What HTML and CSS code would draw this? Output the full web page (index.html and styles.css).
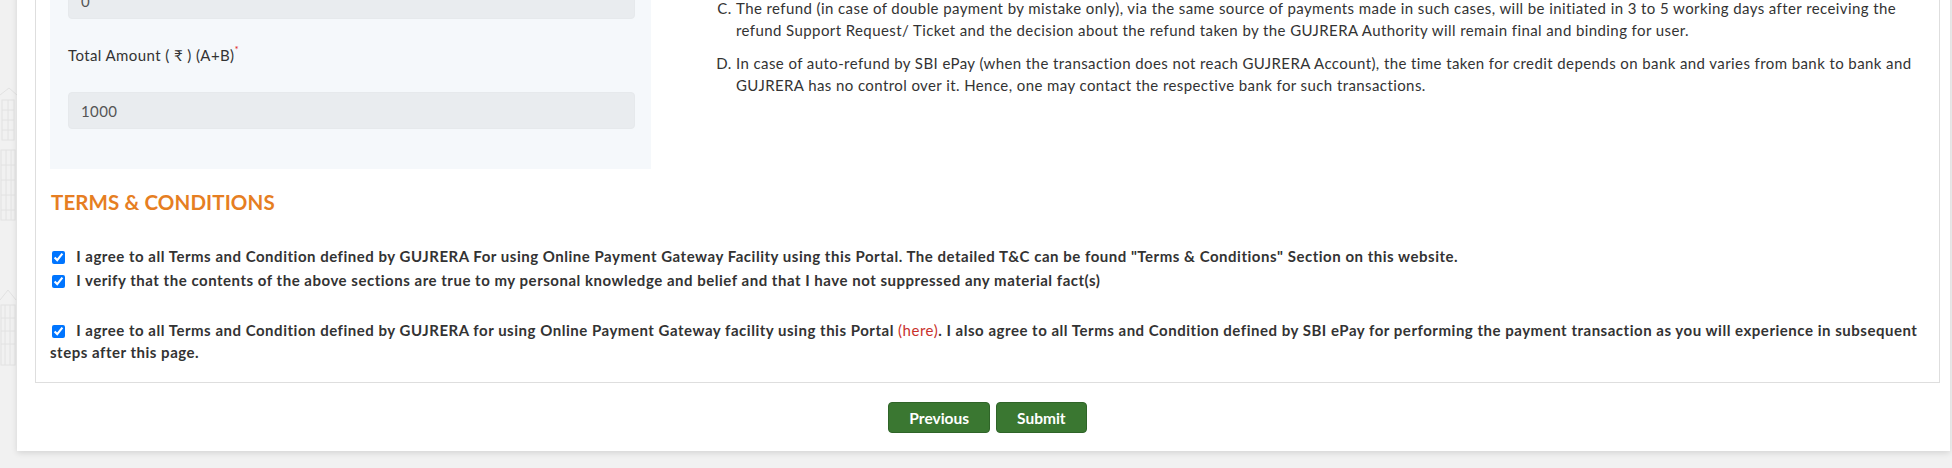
FILE: index.html
```html
<!DOCTYPE html>
<html lang="en">

<head>
    <meta charset="UTF-8" />
    <meta name="viewport" content="width=device-width, initial-scale=1.0" />
    <title>Payment - Terms &amp; Conditions</title>

    <link rel="stylesheet" href="styles.css">
</head>

<body>
    <div class="backdrop">
        <svg width="17" height="468" viewBox="0 0 17 468">
            <g fill="none" stroke="#e2e2e2" stroke-width="1">
                <path d="M0 95 L9 88 L17 95" />
                <rect x="2" y="100" width="12" height="40" />
                <path d="M2 110 H14 M2 120 H14 M2 130 H14 M8 100 V140" />
                <rect x="1" y="150" width="14" height="70" />
                <path d="M1 165 H15 M1 180 H15 M1 195 H15 M1 210 H15 M6 150 V220 M11 150 V220" />
                <path d="M0 300 L8 290 L16 300" />
                <rect x="1" y="305" width="14" height="60" />
                <path d="M1 318 H15 M1 331 H15 M1 344 H15 M5 305 V365 M10 305 V365" />
            </g>
        </svg>
    </div>

    <div class="card">
        <div class="box">
            <div class="top-row">
                <div class="fee-panel">
                    <input class="form-control" type="text" value="0" disabled>

                    <div class="form-group">
                        <label>Total Amount ( ₹ ) (A+B)<sup class="req">*</sup></label>
                        <input class="form-control" type="text" value="1000" disabled>
                    </div>
                </div>

                <ol class="notes" type="A" start="3">
                    <li>The refund (in case of double payment by mistake only), via the same source of payments made in such cases, will be initiated in 3 to 5 working days after receiving the refund Support Request/ Ticket and the decision about the refund taken by the GUJRERA Authority will remain final and binding for user.</li>
                    <li>In case of auto-refund by SBI ePay (when the transaction does not reach GUJRERA Account), the time taken for credit depends on bank and varies from bank to bank and GUJRERA has no control over it. Hence, one may contact the respective bank for such transactions.</li>
                </ol>
            </div>

            <h4 class="section-title">TERMS &amp; CONDITIONS</h4>

            <div class="agree-list">
                <label class="agree"><input type="checkbox" checked> I agree to all Terms and Condition defined by GUJRERA For using Online Payment Gateway Facility using this Portal. The detailed T&amp;C can be found "Terms &amp; Conditions" Section on this website.</label>
                <label class="agree"><input type="checkbox" checked> I verify that the contents of the above sections are true to my personal knowledge and belief and that I have not suppressed any material fact(s)</label>
            </div>

            <label class="agree agree-epay"><input type="checkbox" checked> I agree to all Terms and Condition defined by GUJRERA for using Online Payment Gateway facility using this Portal <a href="#" class="here">(here)</a>. I also agree to all Terms and Condition defined by SBI ePay for performing the payment transaction as you will experience in subsequent steps after this page.</label>
        </div>

        <div class="actions">
            <button type="button" class="btn">Previous</button>
            <button type="button" class="btn">Submit</button>
        </div>
    </div>
</body>

</html>
```

FILE: styles.css
```css
* {
    box-sizing: border-box;
}

html {
    font-family: "Lato", "Liberation Sans", sans-serif;
    font-size: 15px;
    letter-spacing: 0.41px;
    color: #333;
}

body {
    background: #f1f1f1;
    margin: 0;
    padding: 0 2px 0 17px;
    overflow: hidden;
    position: relative;
    height: 468px;
}

.backdrop {
    left: 0;
    position: absolute;
    top: 0;
}

.card {
    background: #fff;
    box-shadow: 0 2px 6px rgba(0, 0, 0, 0.12);
    margin-top: -66px;
    padding: 15px 10px 18px 18px;
    position: relative;
}

.box {
    border: 1px solid #dedede;
    padding: 14px 14px 19px 14px;
}

.top-row {
    display: grid;
    grid-template-columns: 601px 1fr;
    gap: 15px;
}

.fee-panel {
    background: #f5f8fb;
    padding: 18px 16px 40px 18px;
}

.form-control {
    background: #e9ecef;
    border: 1px solid #e6e9ec;
    border-radius: 4px;
    color: #555;
    display: block;
    font: inherit;
    letter-spacing: inherit;
    height: 37px;
    padding: 0 12px;
    width: 100%;
}

.form-group {
    margin-top: 26px;
}

.form-group label {
    display: block;
    line-height: 20px;
    margin-bottom: 27px;
}

.req {
    color: #e02020;
    font-size: 10px;
    vertical-align: 8px;
    line-height: 0;
}

.notes {
    line-height: 22px;
    margin: 33px 0 0 0;
    padding-left: 70px;
}

.notes li {
    margin-bottom: 11px;
}

.section-title {
    color: #e67e22;
    font-size: 20.5px;
    font-weight: 700;
    letter-spacing: 0.1px;
    line-height: 24px;
    margin: 21px 0 31px 1px;
}

.agree {
    display: block;
    font-weight: 700;
    letter-spacing: 0.52px;
}

.agree-list .agree {
    line-height: 23.5px;
}

.agree-epay {
    line-height: 22px;
    margin-top: 27px;
}

.agree input {
    height: 13px;
    margin: 0 7px 0 2px;
    vertical-align: -2px;
    width: 13px;
}

.here {
    color: #c9302c;
    font-weight: 400;
    text-decoration: none;
}

.actions {
    display: flex;
    gap: 6px;
    justify-content: center;
    margin-top: 19px;
}

.btn {
    background: #3a7731;
    border: 1px solid #2f6428;
    border-radius: 4px;
    color: #fff;
    font: inherit;
    font-size: 15.5px;
    font-weight: 700;
    letter-spacing: 0;
    height: 31px;
    padding: 0 20px;
}

.btn:hover {
    cursor: pointer;
}
```
